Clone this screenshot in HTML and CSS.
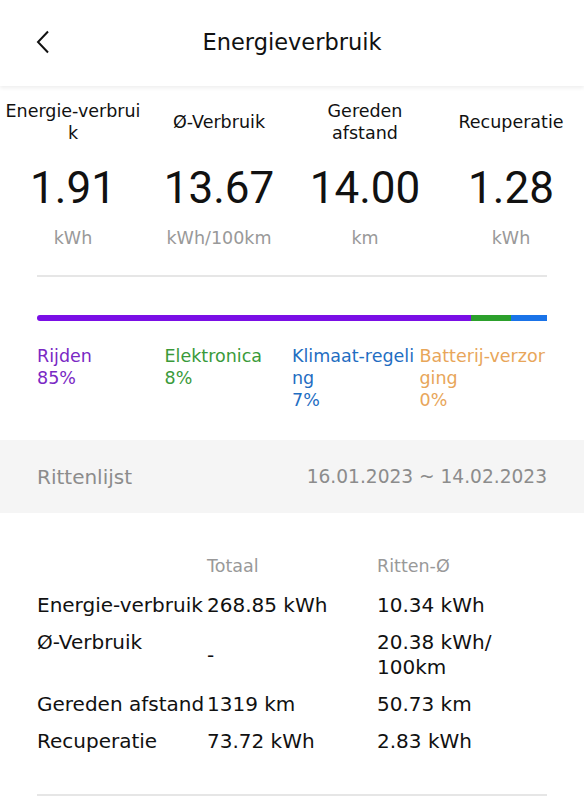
FILE: index.html
```html
<!DOCTYPE html>
<html lang="nl">
<head>
    <meta charset="UTF-8">
    <meta name="viewport" content="width=device-width, initial-scale=1.0">
    <title>Energieverbruik</title>
    <link rel="stylesheet" href="styles.css">
</head>
<body>
    <header class="top-bar">
        <div class="back">
            <svg width="14" height="24" viewBox="0 0 14 24"><path d="M12 1.5 L2 12 L12 22.5" fill="none" stroke="#111" stroke-width="2"/></svg>
        </div>
        <h1>Energieverbruik</h1>
        <div></div>
    </header>

    <div class="stats">
        <div class="stat">
            <div class="stat-label">Energie-verbrui<br>k</div>
            <div class="stat-value">1.91</div>
            <div class="stat-unit">kWh</div>
        </div>
        <div class="stat">
            <div class="stat-label">Ø-Verbruik</div>
            <div class="stat-value">13.67</div>
            <div class="stat-unit">kWh/100km</div>
        </div>
        <div class="stat">
            <div class="stat-label">Gereden<br>afstand</div>
            <div class="stat-value">14.00</div>
            <div class="stat-unit">km</div>
        </div>
        <div class="stat">
            <div class="stat-label">Recuperatie</div>
            <div class="stat-value">1.28</div>
            <div class="stat-unit">kWh</div>
        </div>
    </div>

    <div class="content">
        <hr class="divider">

        <div class="bar">
            <div class="seg purple" style="width: 85%"></div>
            <div class="seg green" style="width: 8%"></div>
            <div class="seg blue" style="width: 7%"></div>
        </div>

        <div class="legend">
            <div class="purple-text">Rijden<br>85%</div>
            <div class="green-text">Elektronica<br>8%</div>
            <div class="blue-text">Klimaat-regeli<br>ng<br>7%</div>
            <div class="orange-text">Batterij-verzor<br>ging<br>0%</div>
        </div>
    </div>

    <div class="trips-bar">
        <span>Rittenlijst</span>
        <span class="dates">16.01.2023 ~ 14.02.2023</span>
    </div>

    <div class="content">
        <div class="table">
            <div class="th"></div>
            <div class="th">Totaal</div>
            <div class="th">Ritten-Ø</div>

            <div>Energie-verbruik</div>
            <div>268.85 kWh</div>
            <div>10.34 kWh</div>

            <div>Ø-Verbruik</div>
            <div class="mid">-</div>
            <div>20.38 kWh/<br>100km</div>

            <div>Gereden afstand</div>
            <div>1319 km</div>
            <div>50.73 km</div>

            <div>Recuperatie</div>
            <div>73.72 kWh</div>
            <div>2.83 kWh</div>
        </div>
        <hr class="divider bottom">
    </div>
</body>
</html>
```

FILE: styles.css
```css
body {
    margin: 0;
    font-family: "DejaVu Sans", "Open Sans", sans-serif;
    color: #111;
    background: #fff;
}

.top-bar {
    height: 86px;
    display: grid;
    grid-template-columns: 1fr auto 1fr;
    align-items: center;
    box-shadow: 0 2px 4px rgba(0, 0, 0, 0.07);
}

.top-bar h1 {
    margin: 0;
    font-size: 22.5px;
    font-weight: normal;
    padding-bottom: 2px;
}

.back {
    padding-left: 36px;
    padding-bottom: 2px;
    display: flex;
}

.stats {
    display: grid;
    grid-template-columns: repeat(4, 1fr);
    text-align: center;
    padding-top: 14px;
}

.stat-label {
    height: 44px;
    font-size: 17.5px;
    line-height: 22px;
    display: flex;
    align-items: center;
    justify-content: center;
}

.stat-value {
    font-family: Roboto, "Liberation Sans", sans-serif;
    font-size: 44px;
    line-height: 1;
    margin-top: 22px;
}

.stat-unit {
    font-size: 17.5px;
    color: #999;
    margin-top: 18px;
}

.content {
    padding: 0 37px;
}

.divider {
    border: none;
    border-top: 2px solid #e6e6e6;
    margin: 27px 0 0;
}

.bar {
    display: flex;
    height: 6px;
    margin-top: 38px;
    border-radius: 3px 0 0 3px;
    overflow: hidden;
}

.purple { background: #7a0ee6; }
.green { background: #2ca02c; }
.blue { background: #1a73e8; }

.legend {
    display: grid;
    grid-template-columns: repeat(4, 1fr);
    font-size: 17.5px;
    line-height: 22px;
    margin-top: 24px;
    padding-bottom: 29px;
}

.purple-text { color: #7a28c4; }
.green-text { color: #3a9a3a; }
.blue-text { color: #1f6ec2; }
.orange-text { color: #e8a65a; }

.trips-bar {
    background: #f5f5f5;
    height: 73px;
    display: flex;
    justify-content: space-between;
    align-items: center;
    padding: 0 37px;
    font-size: 20px;
    color: #8c8c8c;
}

.dates {
    font-size: 18.6px;
}

.table {
    display: grid;
    grid-template-columns: repeat(3, 1fr);
    row-gap: 12px;
    font-size: 20px;
    line-height: 25px;
    padding-top: 41px;
}

.table .th {
    font-size: 17.5px;
    color: #999;
    margin-bottom: 2px;
}

.table .mid {
    align-self: center;
}

.divider.bottom {
    margin-top: 40px;
}
```
